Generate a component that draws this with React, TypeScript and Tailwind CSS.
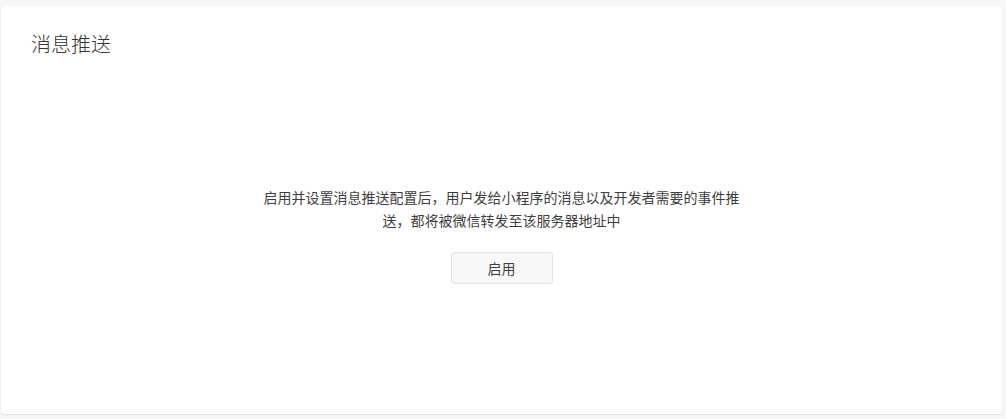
/**
 * Message push settings page: empty state with an enable button.
 */
export default function App() {
  return (
    <div
      className="min-h-screen bg-[#f6f7f9] pt-[6px] pl-[1px] pr-[4px] pb-[5px]"
      style={{ fontFamily: '"Noto Sans CJK SC", "Liberation Sans", sans-serif' }}
    >
      <div className="h-[408px] rounded-[4px] bg-white shadow-[0_1px_2px_rgba(0,0,0,0.1)] px-[30px] pt-[24px]">
        {/* Page title */}
        <h2 className="text-[20px] leading-[28px] font-light text-[#353535]">消息推送</h2>

        {/* Empty state */}
        <div className="flex flex-col items-center mt-[128px]">
          <p className="w-[480px] text-center text-[14px] leading-[23px] text-[#3e3e3e]">
            启用并设置消息推送配置后，用户发给小程序的消息以及开发者需要的事件推送，都将被微信转发至该服务器地址中
          </p>
          <button className="mt-[20px] w-[102px] h-[32px] rounded-[3px] border border-[#e4e4e4] bg-[#f8f8f8] text-[14px] text-[#3e3e3e]">
            启用
          </button>
        </div>
      </div>
    </div>
  );
}
